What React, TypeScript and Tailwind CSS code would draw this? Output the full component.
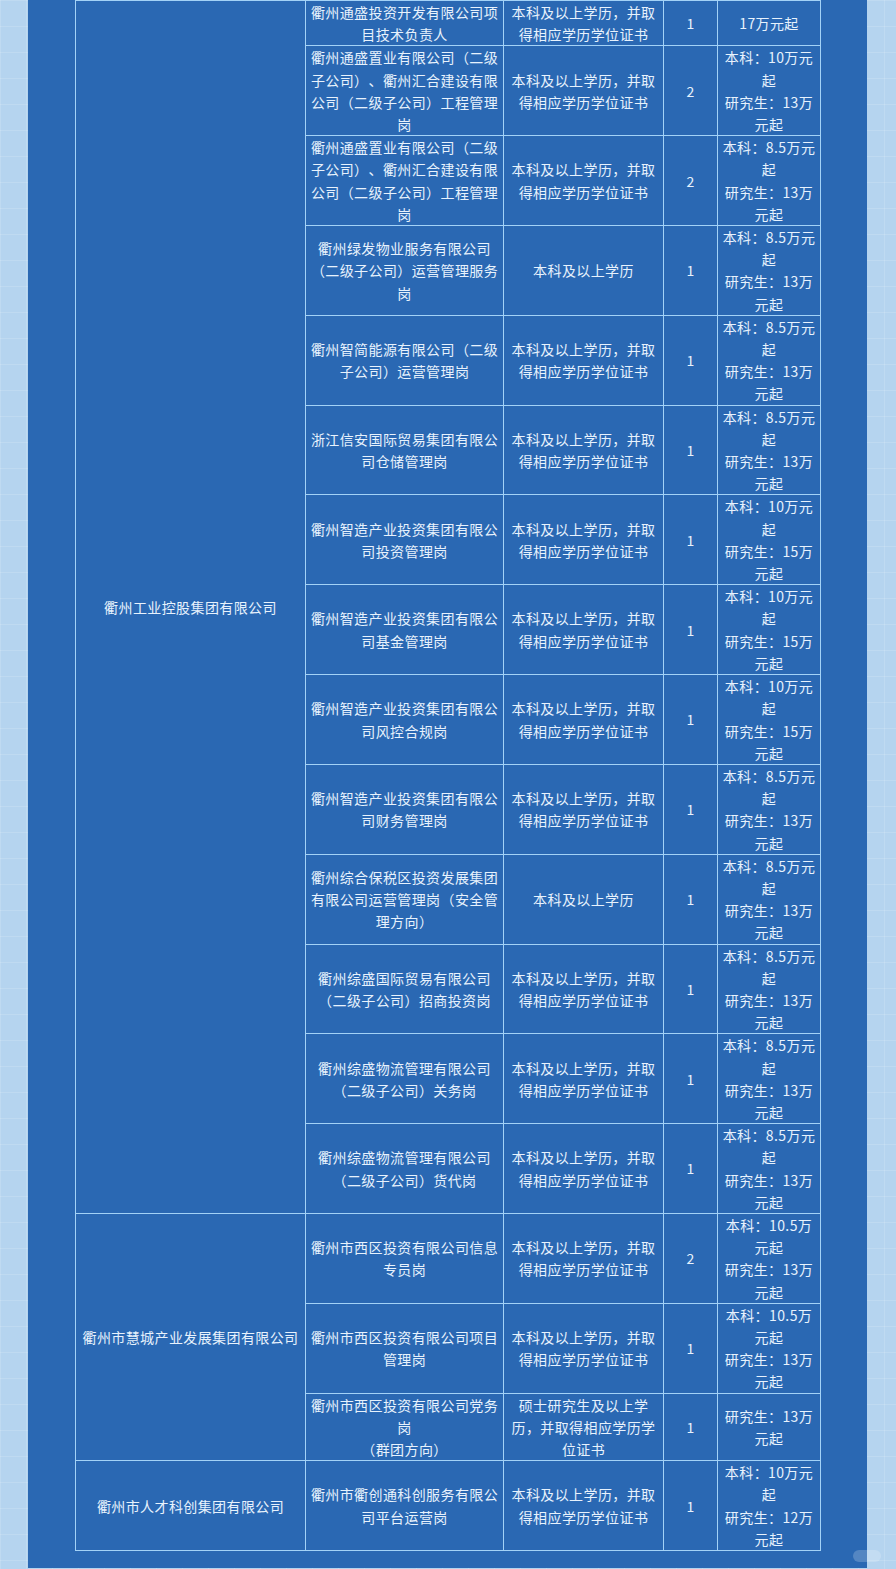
import React from "react"

type Row = {
  post: string[]
  edu: string[]
  count: string
  pay: string[]
  h: string
}

const STD = ["本科及以上学历，并取", "得相应学历学位证书"]
const BK = ["本科及以上学历"]

const pay = (bk: string, yjs: string) => {
  // 本科 line wraps differently for 10.5
  if (bk === "10.5") return ["本科：10.5万", "元起", `研究生：${yjs}万`, "元起"]
  return [`本科：${bk}万元`, "起", `研究生：${yjs}万`, "元起"]
}

const groups: { company: string; rows: Row[] }[] = [
  {
    company: "衢州工业控股集团有限公司",
    rows: [
      { post: ["衢州通盛投资开发有限公司项", "目技术负责人"], edu: STD, count: "1", pay: ["17万元起"], h: "h-[44px]" },
      { post: ["衢州通盛置业有限公司（二级", "子公司）、衢州汇合建设有限", "公司（二级子公司）工程管理", "岗"], edu: STD, count: "2", pay: pay("10", "13"), h: "h-[89px]" },
      { post: ["衢州通盛置业有限公司（二级", "子公司）、衢州汇合建设有限", "公司（二级子公司）工程管理", "岗"], edu: STD, count: "2", pay: pay("8.5", "13"), h: "h-[89px]" },
      { post: ["衢州绿发物业服务有限公司", "（二级子公司）运营管理服务", "岗"], edu: BK, count: "1", pay: pay("8.5", "13"), h: "h-[89px]" },
      { post: ["衢州智简能源有限公司（二级", "子公司）运营管理岗"], edu: STD, count: "1", pay: pay("8.5", "13"), h: "h-[89px]" },
      { post: ["浙江信安国际贸易集团有限公", "司仓储管理岗"], edu: STD, count: "1", pay: pay("8.5", "13"), h: "h-[89px]" },
      { post: ["衢州智造产业投资集团有限公", "司投资管理岗"], edu: STD, count: "1", pay: pay("10", "15"), h: "h-[89px]" },
      { post: ["衢州智造产业投资集团有限公", "司基金管理岗"], edu: STD, count: "1", pay: pay("10", "15"), h: "h-[89px]" },
      { post: ["衢州智造产业投资集团有限公", "司风控合规岗"], edu: STD, count: "1", pay: pay("10", "15"), h: "h-[89px]" },
      { post: ["衢州智造产业投资集团有限公", "司财务管理岗"], edu: STD, count: "1", pay: pay("8.5", "13"), h: "h-[89px]" },
      { post: ["衢州综合保税区投资发展集团", "有限公司运营管理岗（安全管", "理方向）"], edu: BK, count: "1", pay: pay("8.5", "13"), h: "h-[89px]" },
      { post: ["衢州综盛国际贸易有限公司", "（二级子公司）招商投资岗"], edu: STD, count: "1", pay: pay("8.5", "13"), h: "h-[89px]" },
      { post: ["衢州综盛物流管理有限公司", "（二级子公司）关务岗"], edu: STD, count: "1", pay: pay("8.5", "13"), h: "h-[89px]" },
      { post: ["衢州综盛物流管理有限公司", "（二级子公司）货代岗"], edu: STD, count: "1", pay: pay("8.5", "13"), h: "h-[89px]" },
    ],
  },
  {
    company: "衢州市慧城产业发展集团有限公司",
    rows: [
      { post: ["衢州市西区投资有限公司信息", "专员岗"], edu: STD, count: "2", pay: pay("10.5", "13"), h: "h-[89px]" },
      { post: ["衢州市西区投资有限公司项目", "管理岗"], edu: STD, count: "1", pay: pay("10.5", "13"), h: "h-[89px]" },
      { post: ["衢州市西区投资有限公司党务", "岗", "（群团方向）"], edu: ["硕士研究生及以上学", "历，并取得相应学历学", "位证书"], count: "1", pay: ["研究生：13万", "元起"], h: "h-[67px]" },
    ],
  },
  {
    company: "衢州市人才科创集团有限公司",
    rows: [
      { post: ["衢州市衢创通科创服务有限公", "司平台运营岗"], edu: STD, count: "1", pay: pay("10", "12"), h: "h-[88px]" },
    ],
  },
]

function Lines({ lines }: { lines: string[] }) {
  return (
    <>
      {lines.map((l, i) => (
        <div key={i} className="whitespace-nowrap">
          {l}
        </div>
      ))}
    </>
  )
}

const cell = "border border-[#a3d2f7] p-0 text-center align-middle"

export default function App() {
  return (
    <div
      className="flex min-h-[1569px] w-[896px] bg-[#b5d4ef] bg-[linear-gradient(rgba(255,255,255,0.14)_1px,transparent_1px),linear-gradient(90deg,rgba(255,255,255,0.14)_1px,transparent_1px)] bg-[size:26px_26px] pl-[28px]"
      style={{ fontFamily: '"Noto Sans CJK SC", "Noto Sans", sans-serif' }}
    >
      <div className="relative h-[1568px] w-[839px] bg-[#2a68b3] pl-[47px]">
        <table className="w-[745px] table-fixed border-collapse text-[14px] leading-[22.2px] tracking-[0.4px] text-[#e7f2fd] [text-spacing-trim:space-all]">
          <colgroup>
            <col className="w-[230px]" />
            <col className="w-[198px]" />
            <col className="w-[160px]" />
            <col className="w-[54px]" />
            <col className="w-[103px]" />
          </colgroup>
          <tbody>
            {groups.map((g) =>
              g.rows.map((r, i) => (
                <tr key={g.company + i} className={r.h}>
                  {i === 0 && (
                    <td rowSpan={g.rows.length} className={cell}>
                      {g.company}
                    </td>
                  )}
                  <td className={cell}>
                    <Lines lines={r.post} />
                  </td>
                  <td className={cell}>
                    <Lines lines={r.edu} />
                  </td>
                  <td className={cell}>{r.count}</td>
                  <td className={cell}>
                    <Lines lines={r.pay} />
                  </td>
                </tr>
              ))
            )}
          </tbody>
        </table>
        <div className="absolute bottom-[6px] right-[-14px] h-[12px] w-[28px] rounded-full bg-white/20" />
      </div>
    </div>
  )
}
